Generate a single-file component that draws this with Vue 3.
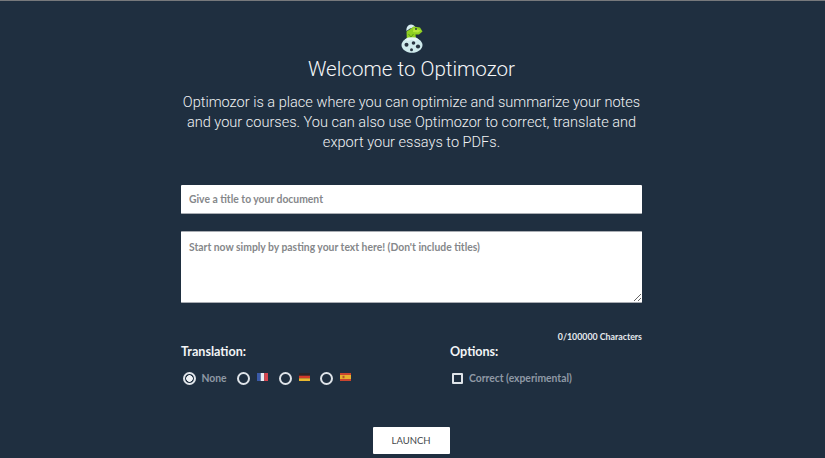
<script setup>
import { ref } from "vue"

const title = ref("")
const body = ref("")
const lang = ref("none")
const correct = ref(false)
</script>

<template>
  <div class="page">
    <header class="head">
      <svg class="logo" width="22" height="29" viewBox="0 0 22 29">
        <path d="M5.5 7 C5 3.5 7 0.5 10 0.5 C12 0.5 13.5 1.5 14 3 L9 4.5 Z" fill="#d8eff1" />
        <path d="M5.5 7.5 L5.8 15 L15 15 L14.5 10.5 L18 10.5 L21.5 7.5 L19 3.5 L12.5 2.5 L9.5 5 Z" fill="#8fd022" />
        <path d="M12.5 4 L20 6.5 L17 8.5 L12 8 Z" fill="#b4e63a" />
        <path d="M7.5 10 L10 13 L12.5 10" fill="none" stroke="#5c9a14" stroke-width="1" />
        <circle cx="15" cy="5" r="0.9" fill="#1d2b3a" />
        <path d="M11 13.5 C16.5 13.5 21.5 17 21.5 21 C21.5 25.5 16.5 28.8 11 28.8 C5.5 28.8 0.5 25.5 0.5 21 C0.5 17 5.5 13.5 11 13.5 Z" fill="#cfeaec" />
        <path d="M3.5 15.5 L7 17 L10.5 15.5 L14 17 L18 15.5 L15 13.5 L7 13.5 Z" fill="#e6f6f7" />
        <circle cx="12.5" cy="19" r="1.8" fill="#27333f" />
        <circle cx="5.5" cy="20.7" r="2" fill="#27333f" />
        <circle cx="17" cy="22.5" r="2.1" fill="#27333f" />
        <circle cx="10.5" cy="25.7" r="1.5" fill="#27333f" />
      </svg>
      <h1>Welcome to Optimozor</h1>
      <p>Optimozor is a place where you can optimize and summarize your notes and your courses. You can also use Optimozor to correct, translate and export your essays to PDFs.</p>
    </header>

    <form class="form" @submit.prevent>
      <input v-model="title" class="field" type="text" placeholder="Give a title to your document" />
      <textarea v-model="body" class="field area" placeholder="Start now simply by pasting your text here! (Don't include titles)"></textarea>
      <div class="count">{{ body.length }}/100000 Characters</div>

      <div class="choices">
        <div class="group">
          <div class="label">Translation:</div>
          <div class="row">
            <label class="opt">
              <input v-model="lang" type="radio" value="none" />
              <span class="radio"></span>
              <span class="txt">None</span>
            </label>
            <label class="opt">
              <input v-model="lang" type="radio" value="fr" />
              <span class="radio"></span>
              <svg class="flag" width="11" height="8" viewBox="0 0 11 8">
                <rect width="3.7" height="8" fill="#3a5aa8" />
                <rect x="3.7" width="3.6" height="8" fill="#e8eef4" />
                <rect x="7.3" width="3.7" height="8" fill="#d8454f" />
              </svg>
            </label>
            <label class="opt">
              <input v-model="lang" type="radio" value="de" />
              <span class="radio"></span>
              <svg class="flag" width="11" height="8" viewBox="0 0 11 8">
                <rect width="11" height="2.7" fill="#2a2426" />
                <rect y="2.7" width="11" height="2.6" fill="#d23a2a" />
                <rect y="5.3" width="11" height="2.7" fill="#e8b830" />
              </svg>
            </label>
            <label class="opt">
              <input v-model="lang" type="radio" value="es" />
              <span class="radio"></span>
              <svg class="flag" width="11" height="8" viewBox="0 0 11 8">
                <rect width="11" height="8" fill="#c9452f" />
                <rect y="2" width="11" height="4" fill="#e6b02e" />
                <rect x="2.5" y="2.8" width="2" height="2.4" fill="#b5552c" />
              </svg>
            </label>
          </div>
        </div>
        <div class="group options">
          <div class="label">Options:</div>
          <div class="row">
            <label class="opt">
              <input v-model="correct" type="checkbox" />
              <span class="check"></span>
              <span class="txt">Correct (experimental)</span>
            </label>
          </div>
        </div>
      </div>

      <button class="launch" type="submit">LAUNCH</button>
    </form>
  </div>
</template>

<style>
html, body {
  margin: 0;
  background: #1f2f40;
}
</style>

<style scoped>
.page {
  box-sizing: border-box;
  width: 825px;
  height: 458px;
  padding: 23px 183px 0 181px;
  overflow: hidden;
  background: #1f2f40;
  border-top: 1px solid #77797c;
  color: #fff;
  font-family: Lato, sans-serif;
}

.head {
  display: flex;
  flex-direction: column;
  align-items: center;
  text-align: center;
}

.logo {
  display: block;
}

h1 {
  margin: 2px 0 0;
  font-family: Roboto, sans-serif;
  font-weight: 300;
  font-size: 20.6px;
  line-height: 28px;
  color: #f4f6f8;
}

.head p {
  width: 461px;
  margin: 10px 0 0;
  font-family: Roboto, sans-serif;
  font-weight: 300;
  font-size: 14.55px;
  line-height: 19.8px;
  color: #f0f2f4;
}

.form {
  display: flex;
  flex-direction: column;
  margin-top: 33px;
}

.field {
  box-sizing: border-box;
  display: block;
  width: 461px;
  height: 29px;
  margin: 0;
  padding: 0 8px;
  border: none;
  border-bottom: 1px solid #a9adb3;
  border-radius: 1px;
  background: #fff;
  outline: none;
  font-family: Lato, sans-serif;
  font-size: 10.35px;
  font-weight: 700;
  color: #333;
}

.field::placeholder {
  color: #85878a;
  opacity: 1;
}

.area {
  height: 72px;
  margin-top: 17px;
  padding: 9px 8px;
  border-top: 1px solid #a9adb3;
  resize: vertical;
}

.count {
  margin-top: 28px;
  text-align: right;
  font-size: 8.8px;
  font-weight: 700;
  line-height: 12px;
  color: #e6eaee;
}

.choices {
  display: flex;
  margin-top: 1px;
}

.group {
  width: 269px;
}

.options {
  width: auto;
}

.label {
  font-size: 12.6px;
  font-weight: 700;
  line-height: 16px;
  color: #f2f4f6;
}

.row {
  display: flex;
  align-items: center;
  gap: 10.5px;
  margin-top: 11px;
  padding-left: 1.5px;
}

.opt {
  display: flex;
  align-items: center;
  gap: 6px;
  height: 14px;
}

.opt input {
  display: none;
}

.radio {
  box-sizing: border-box;
  width: 13px;
  height: 13px;
  border: 2px solid #dfe4e9;
  border-radius: 50%;
}

.opt input:checked + .radio {
  background: radial-gradient(circle, #eef1f4 0 3px, transparent 3.6px);
}

.check {
  box-sizing: border-box;
  width: 11px;
  height: 11px;
  margin-right: 0.5px;
  border: 2px solid #dfe4e9;
  border-radius: 1px;
}

.txt {
  font-size: 10.35px;
  font-weight: 700;
  color: #8f99a5;
}

.flag {
  display: block;
  margin-top: -3px;
  margin-left: 1px;
}

.launch {
  align-self: center;
  width: 77px;
  height: 27px;
  margin: 42px 0 0 -1px;
  padding: 0;
  border: none;
  border-radius: 1px;
  background: #fff;
  font-family: Lato, sans-serif;
  font-size: 9.5px;
  color: #44474b;
}
</style>
